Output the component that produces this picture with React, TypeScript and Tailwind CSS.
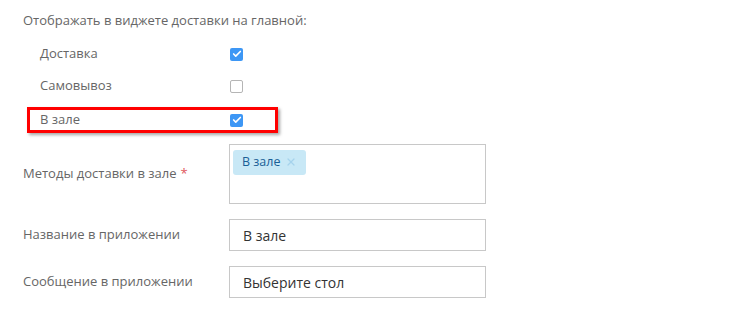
import { Check, X } from "lucide-react";

const font = { fontFamily: '"Open Sans", "Liberation Sans", sans-serif' };

const Checkbox = ({ checked }: { checked: boolean }) =>
  checked ? (
    <span className="flex h-[13px] w-[13px] items-center justify-center rounded-[2px] bg-[#3d97f5]">
      <Check className="h-[10px] w-[10px] text-white" strokeWidth={4} />
    </span>
  ) : (
    <span className="block h-[13px] w-[13px] rounded-[2px] border border-[#b5b5b5] bg-white" />
  );

const FormRow = ({ label, required, children }: { label: string; required?: boolean; children: React.ReactNode }) => (
  <div className="flex items-center">
    <div className="w-[206px] text-[13px] text-[#666]">
      {label}
      {required && <span className="ml-1 text-[#e0575b]">*</span>}
    </div>
    {children}
  </div>
);

export default function App() {
  return (
    <div className="h-[323px] w-[740px] bg-white pl-[23px] pt-[11px]" style={font}>
      <div className="h-[18px] text-[13px] leading-[18px] text-[#666]">
        Отображать в виджете доставки на главной:
      </div>

      <div className="mt-[12px] w-[251px] pl-[4px]">
        <div className="flex h-[26px] items-center pl-[13px]">
          <span className="w-[190px] text-[13px] text-[#666]">Доставка</span>
          <Checkbox checked />
        </div>
        <div className="mt-[6px] flex h-[26px] items-center pl-[13px]">
          <span className="w-[190px] text-[13px] text-[#666]">Самовывоз</span>
          <Checkbox checked={false} />
        </div>
      </div>

      <div className="ml-[4px] mt-[8px] flex h-[26px] w-[251px] items-center border-[3px] border-[#ff0000] pl-[10px] shadow-[2px_2px_3px_rgba(0,0,0,0.35)]">
        <span className="w-[190px] text-[13px] text-[#666]">В зале</span>
        <Checkbox checked />
      </div>

      <div className="mt-[11px] flex flex-col gap-[15px]">
        <FormRow label="Методы доставки в зале" required>
          <div className="h-[60px] w-[257px] border border-[#c8c8c8] p-[3px]">
            <span className="inline-flex h-[25px] items-center gap-[5px] rounded-[3px] bg-[#c8e8f6] px-[9px] text-[12.5px] text-[#1a5f96]">
              В зале
              <X className="h-[12px] w-[12px] text-[#a6d3ec]" strokeWidth={2.5} />
            </span>
          </div>
        </FormRow>
        <FormRow label="Название в приложении">
          <div className="flex h-[32px] w-[257px] items-center border border-[#c8c8c8] px-[13px] text-[14px] text-[#333]">
            В зале
          </div>
        </FormRow>
        <FormRow label="Сообщение в приложении">
          <div className="flex h-[32px] w-[257px] items-center border border-[#c8c8c8] px-[13px] text-[14px] text-[#333]">
            Выберите стол
          </div>
        </FormRow>
      </div>
    </div>
  );
}
